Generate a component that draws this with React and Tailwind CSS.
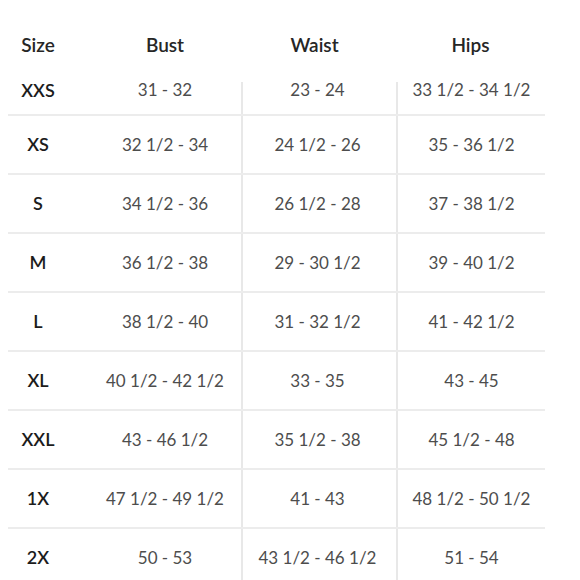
const rows = [
  ["XXS", "31 - 32", "23 - 24", "33 1/2 - 34 1/2"],
  ["XS", "32 1/2 - 34", "24 1/2 - 26", "35 - 36 1/2"],
  ["S", "34 1/2 - 36", "26 1/2 - 28", "37 - 38 1/2"],
  ["M", "36 1/2 - 38", "29 - 30 1/2", "39 - 40 1/2"],
  ["L", "38 1/2 - 40", "31 - 32 1/2", "41 - 42 1/2"],
  ["XL", "40 1/2 - 42 1/2", "33 - 35", "43 - 45"],
  ["XXL", "43 - 46 1/2", "35 1/2 - 38", "45 1/2 - 48"],
  ["1X", "47 1/2 - 49 1/2", "41 - 43", "48 1/2 - 50 1/2"],
  ["2X", "50 - 53", "43 1/2 - 46 1/2", "51 - 54"],
];

const grid = "grid grid-cols-[60px_173px_155px_149px]";

export default function App() {
  return (
    <div className="w-[580px] h-[580px] overflow-hidden bg-white pl-2 font-['Lato',sans-serif]">
      <div className="w-[537px]">
        {/* header */}
        <div className={`${grid} h-[66px] items-start pt-[31px] text-[19px] font-semibold text-[#262626]`}>
          <div className="text-center">Size</div>
          <div className="pl-[21px] text-center">Bust</div>
          <div className="pr-[8px] text-center">Waist</div>
          <div className="text-center">Hips</div>
        </div>

        {rows.map((r, i) => {
          const first = i === 0;
          const rowH = first ? "h-[50px]" : "h-[59px]";
          const vline = first
            ? "border-l-2 [border-image:linear-gradient(to_bottom,transparent_16px,#e8e8e8_16px)_1]"
            : "border-l-2 border-[#e8e8e8]";
          return (
            <div key={r[0]} className={`${grid} ${rowH} border-b-2 border-[#ececec]`}>
              <div className="flex items-center justify-center text-[18px] font-semibold text-[#1c1c1c]">{r[0]}</div>
              <div className="flex items-center justify-center pl-[21px] text-[17px] text-[#4d4d4d]">{r[1]}</div>
              <div className={`flex items-center justify-center pr-[4px] text-[17px] text-[#4d4d4d] ${vline}`}>{r[2]}</div>
              <div className={`flex items-center justify-center text-[17px] text-[#4d4d4d] ${vline}`}>{r[3]}</div>
            </div>
          );
        })}
      </div>
    </div>
  );
}
